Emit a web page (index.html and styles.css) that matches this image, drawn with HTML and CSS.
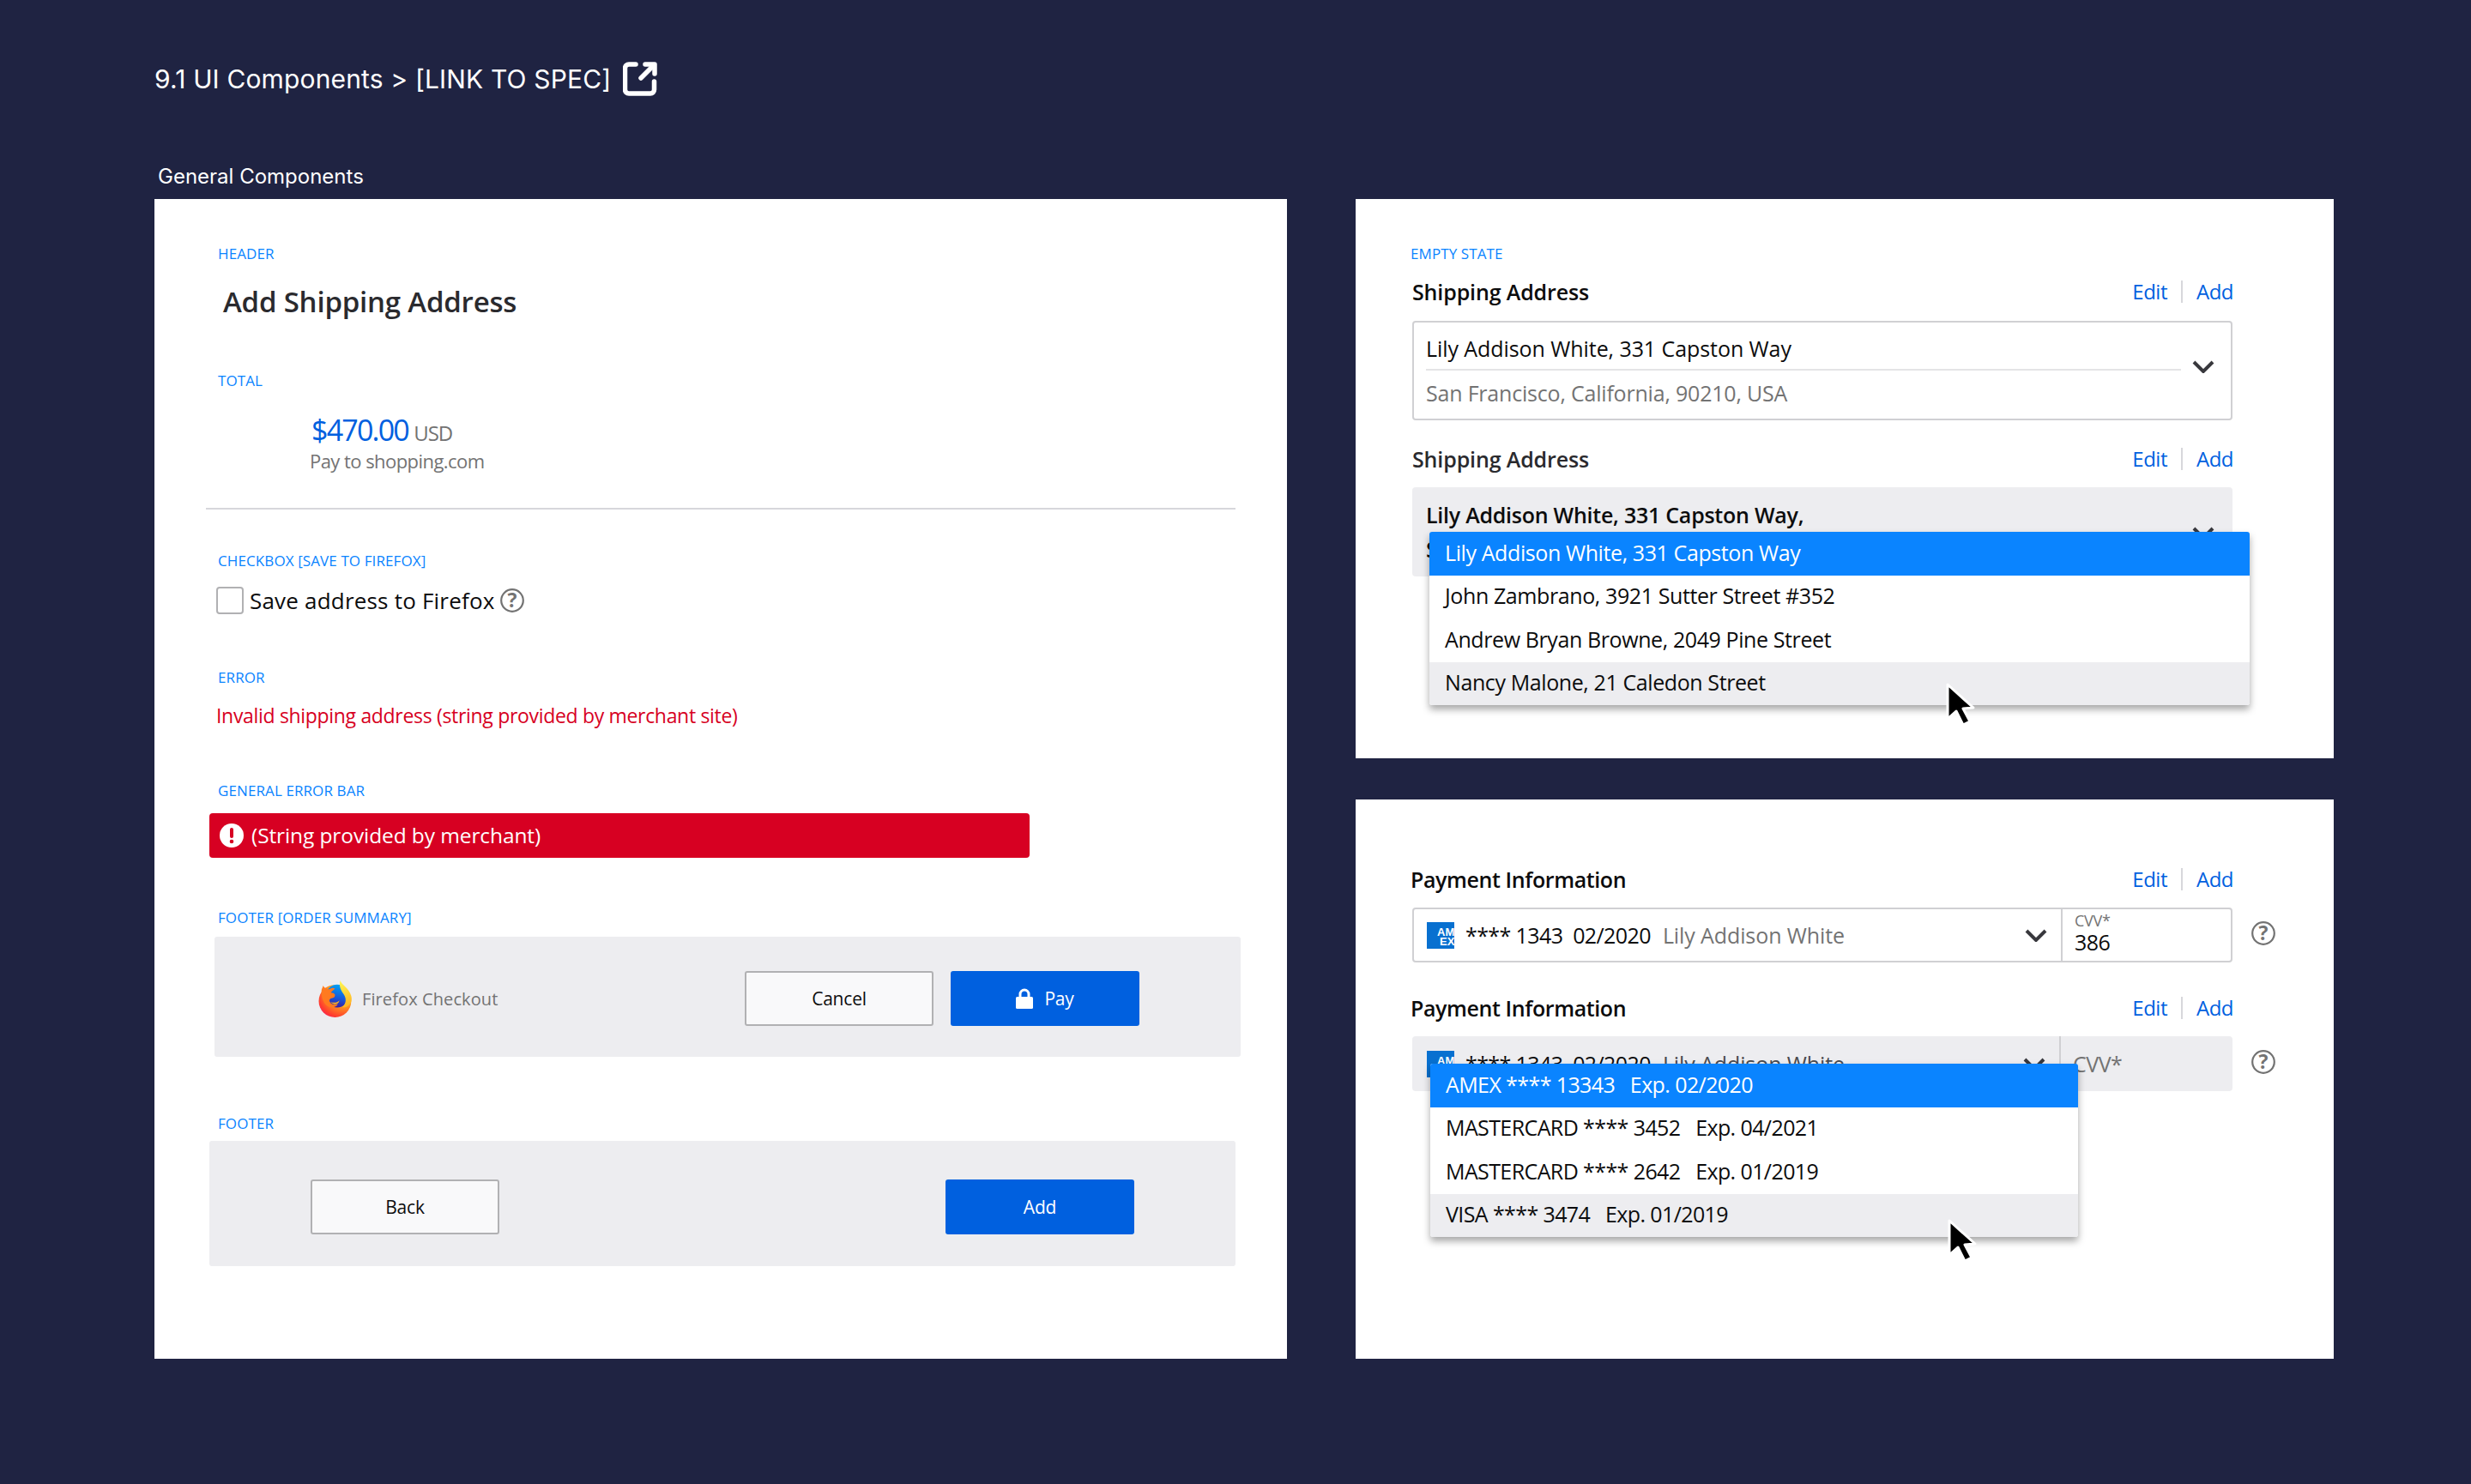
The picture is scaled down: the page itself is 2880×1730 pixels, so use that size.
FILE: index.html
```html
<!DOCTYPE html>
<html lang="en">
<head>
<meta charset="utf-8">
<title>9.1 UI Components</title>
<link rel="stylesheet" href="styles.css">
</head>
<body>
<main class="page">
  <header class="page-title">
    <span>9.1 UI Components &gt; [LINK TO SPEC]</span>
    <svg class="ext-icon" viewBox="0 0 40 40" fill="none" stroke="#fff" stroke-width="5.500" stroke-linecap="round" stroke-linejoin="round"><path d="M15 3H7a4.500 4.500 0 0 0-4.500 4.500v25A4.500 4.500 0 0 0 7 37h25a4.500 4.500 0 0 0 4.500-4.500V23"/><path d="M21 19 36 4"/><path d="M26 3h11v11"/></svg>
  </header>
  <div class="page-sub">General Components</div>
  <div class="boards">
    <section class="panel panel-main">
      <div class="tag">HEADER</div>
      <h2 class="main-title">Add Shipping Address</h2>
      <div class="tag tag-total">TOTAL</div>
      <div class="amount"><span class="amount-value">$470.00</span> <span class="amount-cur">USD</span></div>
      <div class="pay-to">Pay to shopping.com</div>
      <hr class="rule">
      <div class="tag tag-check">CHECKBOX [SAVE TO FIREFOX]</div>
      <div class="check-row">
        <span class="checkbox"></span>
        <span class="check-text">Save address to Firefox</span>
        <svg class="help" viewBox="0 0 28 28"><circle cx="14" cy="14" r="12.800" fill="none" stroke="#737373" stroke-width="2.200"/><text x="14" y="22" class="help-q">?</text></svg>
      </div>
      <div class="tag tag-error">ERROR</div>
      <div class="error-text">Invalid shipping address (string provided by merchant site)</div>
      <div class="tag tag-bar">GENERAL ERROR BAR</div>
      <div class="error-bar">
        <svg class="err-icon" viewBox="0 0 28 28"><circle cx="14" cy="14" r="14" fill="#fff"/><rect x="12" y="5" width="4" height="12" rx="2" fill="#d70022"/><circle cx="14" cy="21" r="2.300" fill="#d70022"/></svg>
        <span class="error-bar-text">(String provided by merchant)</span>
      </div>
      <div class="tag tag-fos">FOOTER [ORDER SUMMARY]</div>
      <div class="footer footer-order">
        <div class="brand">
          <svg class="fx" viewBox="3 0 95 100">
            <defs>
              <radialGradient id="fxBody" cx="0.75" cy="0.2" r="1"><stop offset="0" stop-color="#ffe226"/><stop offset="0.45" stop-color="#ff9a1f"/><stop offset="0.8" stop-color="#ff3d2e"/><stop offset="1" stop-color="#f5156c"/></radialGradient>
              <linearGradient id="fxGlobe" x1="0.6" y1="0" x2="0.4" y2="1"><stop offset="0" stop-color="#00a4f5"/><stop offset="0.6" stop-color="#1a56d8"/><stop offset="1" stop-color="#3a1a9c"/></linearGradient>
              <linearGradient id="fxTail" x1="0.4" y1="0" x2="0.6" y2="1"><stop offset="0" stop-color="#fff44f"/><stop offset="1" stop-color="#ffb21f"/></linearGradient>
            </defs>
            <circle cx="48" cy="56" r="44" fill="url(#fxBody)"/>
            <circle cx="54" cy="42" r="31" fill="url(#fxGlobe)"/>
            <path d="M12 24 C14 20 15 17 16 14 C20 22 26 23 32 24 C38 20 44 19 48 22 C44 27 38 28 38 34 C46 34 50 38 47 44 C42 50 34 46 33 54 C34 64 46 68 56 64 C50 76 30 76 20 62 C12 50 10 36 12 24Z" fill="#ff7a1f"/>
            <path d="M36 58 C44 62 56 60 60 54 C58 66 44 68 36 58Z" fill="#ffb21f"/>
            <path d="M62 0 C66 12 86 20 92 42 C97 60 84 76 68 72 C78 64 80 50 72 38 C66 28 58 20 62 0Z" fill="url(#fxTail)"/>
          </svg>
          <span class="brand-name">Firefox Checkout</span>
        </div>
        <button class="btn btn-ghost">Cancel</button>
        <button class="btn btn-primary">
          <svg class="lock" viewBox="0 0 20 24"><path d="M5 11V7a5 5 0 0 1 10 0v4" fill="none" stroke="#fff" stroke-width="3"/><rect x="0" y="10" width="20" height="14" rx="1.500" fill="#fff"/></svg>
          <span>Pay</span>
        </button>
      </div>
      <div class="tag tag-foot">FOOTER</div>
      <div class="footer footer-plain">
        <button class="btn btn-ghost">Back</button>
        <button class="btn btn-primary">Add</button>
      </div>
    </section>

    <section class="panel panel-ship">
      <div class="tag tag-empty">EMPTY STATE</div>
      <div class="field-head field-head-a"><span class="field-title field-title-ship">Shipping Address</span><span class="links"><a>Edit</a><i></i><a>Add</a></span></div>
      <div class="addr-select">
        <div class="addr-lines">
          <div class="addr-one">Lily Addison White, 331 Capston Way</div>
          <div class="addr-two">San Francisco, California, 90210, USA</div>
        </div>
        <svg class="chev chev-addr" viewBox="0 0 26 15" fill="none" stroke="#38383d" stroke-width="4"><path d="M2 2l11 11L24 2"/></svg>
      </div>
      <div class="field-head field-head-b"><span class="field-title field-title-ship field-title-soft">Shipping Address</span><span class="links"><a>Edit</a><i></i><a>Add</a></span></div>
      <div class="addr-select addr-open">
        <div class="addr-lines">
          <div class="addr-bold">Lily Addison White, 331 Capston Way,</div>
          <div class="addr-bold">San Francisco, California, 90210, USA</div>
        </div>
        <svg class="chev chev-open" viewBox="0 0 26 15" fill="none" stroke="#38383d" stroke-width="4"><path d="M2 2l11 11L24 2"/></svg>
        <ul class="menu menu-addr">
          <li class="on">Lily Addison White, 331 Capston Way</li>
          <li>John Zambrano, 3921 Sutter Street #352</li>
          <li>Andrew Bryan Browne, 2049 Pine Street</li>
          <li class="hover">Nancy Malone, 21 Caledon Street</li>
          <svg class="cursor cursor-addr" viewBox="0 0 34 50"><path d="M2 2 2 42 12 33 20 49 28 45 20 30 32 29Z" fill="#000" stroke="#fff" stroke-width="3" stroke-linejoin="round"/></svg>
        </ul>
      </div>
    </section>

    <section class="panel panel-pay">
      <div class="field-head field-head-c"><span class="field-title">Payment Information</span><span class="links"><a>Edit</a><i></i><a>Add</a></span></div>
      <div class="pay-row">
        <div class="pay-select">
          <div class="card-part">
            <svg class="amex" viewBox="0 0 32 31"><rect width="32" height="31" fill="#0870d0"/><text x="12" y="16" class="amex-t">AM</text><text x="15" y="27" class="amex-t">EX</text></svg>
            <span class="card-num">**** 1343&nbsp; 02/2020</span>
            <span class="card-name">Lily Addison White</span>
            <svg class="chev chev-card" viewBox="0 0 26 15" fill="none" stroke="#38383d" stroke-width="4"><path d="M2 2l11 11L24 2"/></svg>
          </div>
          <div class="cvv-part">
            <span class="cvv-small">CVV*</span>
            <span class="cvv-val">386</span>
          </div>
        </div>
        <svg class="help" viewBox="0 0 28 28"><circle cx="14" cy="14" r="12.800" fill="none" stroke="#737373" stroke-width="2.200"/><text x="14" y="22" class="help-q">?</text></svg>
      </div>
      <div class="field-head field-head-d"><span class="field-title">Payment Information</span><span class="links"><a>Edit</a><i></i><a>Add</a></span></div>
      <div class="pay-row">
        <div class="pay-select pay-open">
          <div class="card-part">
            <svg class="amex" viewBox="0 0 32 31"><rect width="32" height="31" fill="#0870d0"/><text x="12" y="16" class="amex-t">AM</text><text x="15" y="27" class="amex-t">EX</text></svg>
            <span class="card-num">**** 1343&nbsp; 02/2020</span>
            <span class="card-name card-name-dark">Lily Addison White</span>
            <svg class="chev chev-card" viewBox="0 0 26 15" fill="none" stroke="#38383d" stroke-width="4"><path d="M2 2l11 11L24 2"/></svg>
          </div>
          <div class="cvv-part cvv-empty">CVV*</div>
          <ul class="menu menu-card">
            <li class="on">AMEX **** 13343 &nbsp; Exp. 02/2020</li>
            <li>MASTERCARD **** 3452 &nbsp; Exp. 04/2021</li>
            <li>MASTERCARD **** 2642 &nbsp; Exp. 01/2019</li>
            <li class="hover">VISA **** 3474 &nbsp; Exp. 01/2019</li>
            <svg class="cursor cursor-card" viewBox="0 0 34 50"><path d="M2 2 2 42 12 33 20 49 28 45 20 30 32 29Z" fill="#000" stroke="#fff" stroke-width="3" stroke-linejoin="round"/></svg>
          </ul>
        </div>
        <svg class="help" viewBox="0 0 28 28"><circle cx="14" cy="14" r="12.800" fill="none" stroke="#737373" stroke-width="2.200"/><text x="14" y="22" class="help-q">?</text></svg>
      </div>
    </section>
  </div>
</main>
</body>
</html>
```
FILE: styles.css
```css
* { box-sizing: border-box; }
html, body { margin: 0; padding: 0; }
body {
  width: 2880px;
  height: 1730px;
  overflow: hidden;
  background: #1f2342;
  font-family: "Open Sans", "Noto Sans", sans-serif;
  color: #0c0c0d;
}
.page { padding: 72px 160px 0 180px; }
.page-title {
  display: flex;
  align-items: center;
  gap: 14px;
  height: 40px;
  font-family: Inter, sans-serif;
  font-size: 30px;
  color: #fff;
  letter-spacing: 0.15px;
}
.ext-icon { width: 40px; height: 40px; }
.page-sub {
  margin: 78px 0 0 4px;
  height: 42px;
  line-height: 32px;
  font-family: Inter, sans-serif;
  font-size: 24px;
  color: #fff;
}
.boards {
  display: grid;
  grid-template-columns: 1320px 1140px;
  grid-template-rows: 652px 652px;
  column-gap: 80px;
  row-gap: 48px;
}
.panel { background: #fff; }
.panel-main { grid-row: 1 / 3; padding: 54px 60px 0; }
.panel-ship { padding: 54px 118px 0 66px; }
.panel-pay { padding: 76px 0 0 66px; }

.tag {
  margin-left: 14px;
  height: 20px;
  line-height: 20px;
  font-size: 17px;
  color: #0a84ff;
  letter-spacing: 0.1px;
  white-space: nowrap;
}
.main-title {
  margin: 24px 0 0 20px;
  font-size: 33px;
  line-height: 44px;
  font-weight: 600;
  color: #2a2a2e;
  letter-spacing: -0.2px;
}
.tag-total { margin-top: 60px; }
.amount { margin: 27px 0 0 123px; height: 40px; line-height: 40px; white-space: nowrap; }
.amount-value { font-size: 34px; color: #0060df; letter-spacing: -1.800px; margin-right: 2px; }
.amount-cur { font-size: 24px; color: #737373; letter-spacing: -1px; }
.pay-to { margin: 1px 0 0 121px; font-size: 22px; line-height: 30px; color: #737373; letter-spacing: -0.55px; }
.rule { margin: 40px 0 0; height: 2px; border: 0; background: #d7d7db; }
.tag-check { margin-top: 50px; }
.check-row { display: flex; align-items: center; margin: 20px 0 0 12px; height: 32px; }
.checkbox { width: 32px; height: 32px; border: 2px solid #b1b1b3; border-radius: 4px; }
.check-text { margin-left: 7px; font-size: 26px; letter-spacing: 0.2px; }
.help { width: 28px; height: 28px; flex: none; }
.check-row .help { margin-left: 6px; }
.help-q { font-size: 23px; font-weight: 700; fill: #737373; text-anchor: middle; font-family: "Open Sans", sans-serif; }
.tag-error { margin-top: 64px; }
.error-text { margin: 18px 0 0 12px; font-size: 23px; line-height: 32px; color: #d70022; letter-spacing: -0.32px; white-space: nowrap; }
.tag-bar { margin-top: 62px; }
.error-bar {
  display: flex;
  align-items: center;
  gap: 9px;
  margin: 16px 0 0 4px;
  width: 956px;
  height: 52px;
  padding-left: 12px;
  border-radius: 4px;
  background: #d70022;
  color: #fff;
  font-size: 24.500px;
  letter-spacing: -0.1px;
}
.error-bar-text { padding-bottom: 2px; }
.err-icon { width: 28px; height: 28px; }
.tag-fos { margin-top: 60px; }
.tag-foot { margin-top: 68px; }
.footer { display: flex; background: #ededf0; border-radius: 3px; width: 1196px; }
.footer-order { margin: 12px 0 0 10px; height: 140px; padding: 40px 118px 0 121px; gap: 20px; }
.footer-plain { margin: 10px 0 0 4px; height: 146px; padding: 45px 118px 0; justify-content: space-between; }
.brand { display: flex; align-items: center; gap: 10px; margin-right: auto; height: 64px; }
.fx { width: 41px; height: 43px; }
.brand-name { font-size: 20px; color: #737373; letter-spacing: 0.1px; }
.btn {
  display: flex;
  align-items: center;
  justify-content: center;
  gap: 13px;
  width: 220px;
  height: 64px;
  border-radius: 3px;
  font-family: inherit;
  font-size: 21px;
  letter-spacing: -0.2px;
  padding: 0;
}
.btn-ghost { background: #f9f9fa; border: 2px solid #b1b1b3; color: #0c0c0d; }
.btn-primary { background: #0060df; border: 0; color: #fff; }
.lock { width: 20px; height: 24px; }

.tag-empty { margin-left: -2px; }
.field-head { display: flex; justify-content: space-between; align-items: center; height: 36px; width: 957px; padding-bottom: 3px; }
.field-head-a { margin-top: 18px; padding-bottom: 5px; }
.field-head-b { margin-top: 28px; }
.field-head-c { margin-left: -2px; width: 959px; }
.field-head-d { margin: 36px 0 0 -2px; width: 959px; }
.field-title { font-size: 25px; font-weight: 600; letter-spacing: -0.4px; color: #0c0c0d; }
.field-title-ship { letter-spacing: -0.13px; }
.field-title-soft { color: #2a2a2e; }
.links { display: flex; align-items: center; font-size: 24px; color: #0060df; letter-spacing: -0.5px; }
.links i { width: 2px; height: 26px; margin: 0 16px; background: #d7d7db; }

.addr-select {
  position: relative;
  display: flex;
  margin-top: 14px;
  width: 956px;
  height: 116px;
  border: 2px solid #d0d0d3;
  border-radius: 4px;
}
.addr-lines { padding: 0 0 0 14px; width: 894px; }
.addr-one { height: 56px; line-height: 60px; border-bottom: 2px solid #e4e4e6; font-size: 25px; letter-spacing: -0.07px; white-space: nowrap; }
.addr-two { line-height: 52px; font-size: 25px; color: #737373; letter-spacing: -0.2px; white-space: nowrap; }
.chev { width: 26px; height: 15px; flex: none; }
.chev-addr { margin: 44px 0 0 13px; }
.addr-open { height: 104px; border: 0; background: #ededf0; }
.addr-open .addr-lines { padding: 12px 0 0 16px; }
.addr-bold { line-height: 40px; font-size: 25px; font-weight: 600; letter-spacing: -0.25px; white-space: nowrap; }
.chev-open { margin: 46px 0 0 15px; }

.menu {
  position: absolute;
  margin: 0;
  padding: 0;
  list-style: none;
  background: #fff;
  border-radius: 3px;
  box-shadow: 0 5px 8px rgba(0, 0, 0, 0.35);
  font-size: 25px;
  font-weight: 400;
  color: #0c0c0d;
  white-space: nowrap;
}
.menu li { display: flex; align-items: center; height: 50.500px; padding: 0 0 3px 18px; }
.menu .on { background: #0a84ff; color: #fff; border-radius: 3px 3px 0 0; }
.menu .hover { background: #ededf0; border-radius: 0 0 3px 3px; }
.menu-addr { top: 52px; left: 20px; width: 956px; letter-spacing: -0.4px; }
.menu-card { top: 32px; left: 21px; width: 755px; letter-spacing: -0.6px; }
.cursor { position: absolute; width: 34px; height: 50px; }
.cursor-addr { left: 602px; top: 176px; }
.cursor-card { left: 603px; top: 181px; }

.pay-row { display: flex; align-items: center; gap: 22px; margin-top: 14px; }
.pay-row .help { position: relative; top: -2px; }
.pay-select {
  position: relative;
  display: flex;
  width: 956px;
  height: 64px;
  border: 2px solid #d0d0d3;
  border-radius: 4px;
}
.card-part {
  display: flex;
  align-items: center;
  width: 756px;
  padding: 0 16px 0 15px;
  border-right: 2px solid #d0d0d3;
  font-size: 25px;
  white-space: nowrap;
}
.amex { width: 32px; height: 31px; flex: none; margin-right: 13px; }
.amex-t { font-family: "Liberation Sans", sans-serif; font-size: 13px; font-weight: 700; fill: #fff; }
.card-num { letter-spacing: -0.6px; }
.card-name { margin-left: 14px; color: #737373; letter-spacing: -0.1px; }
.card-name-dark { color: #4a4a4f; }
.chev-card { margin-left: auto; }
.cvv-part { display: flex; flex-direction: column; padding-left: 14px; }
.cvv-small { margin-top: 3px; font-size: 18px; line-height: 20px; color: #737373; letter-spacing: -0.3px; }
.cvv-val { font-size: 25px; line-height: 30px; letter-spacing: -0.5px; }
.pay-open { border: 0; background: #ededf0; }
.pay-open .card-part { width: 756px; padding: 0 16px 0 17px; }
.pay-open .cvv-empty { justify-content: center; font-size: 25px; color: #737373; letter-spacing: -0.5px; }
```
